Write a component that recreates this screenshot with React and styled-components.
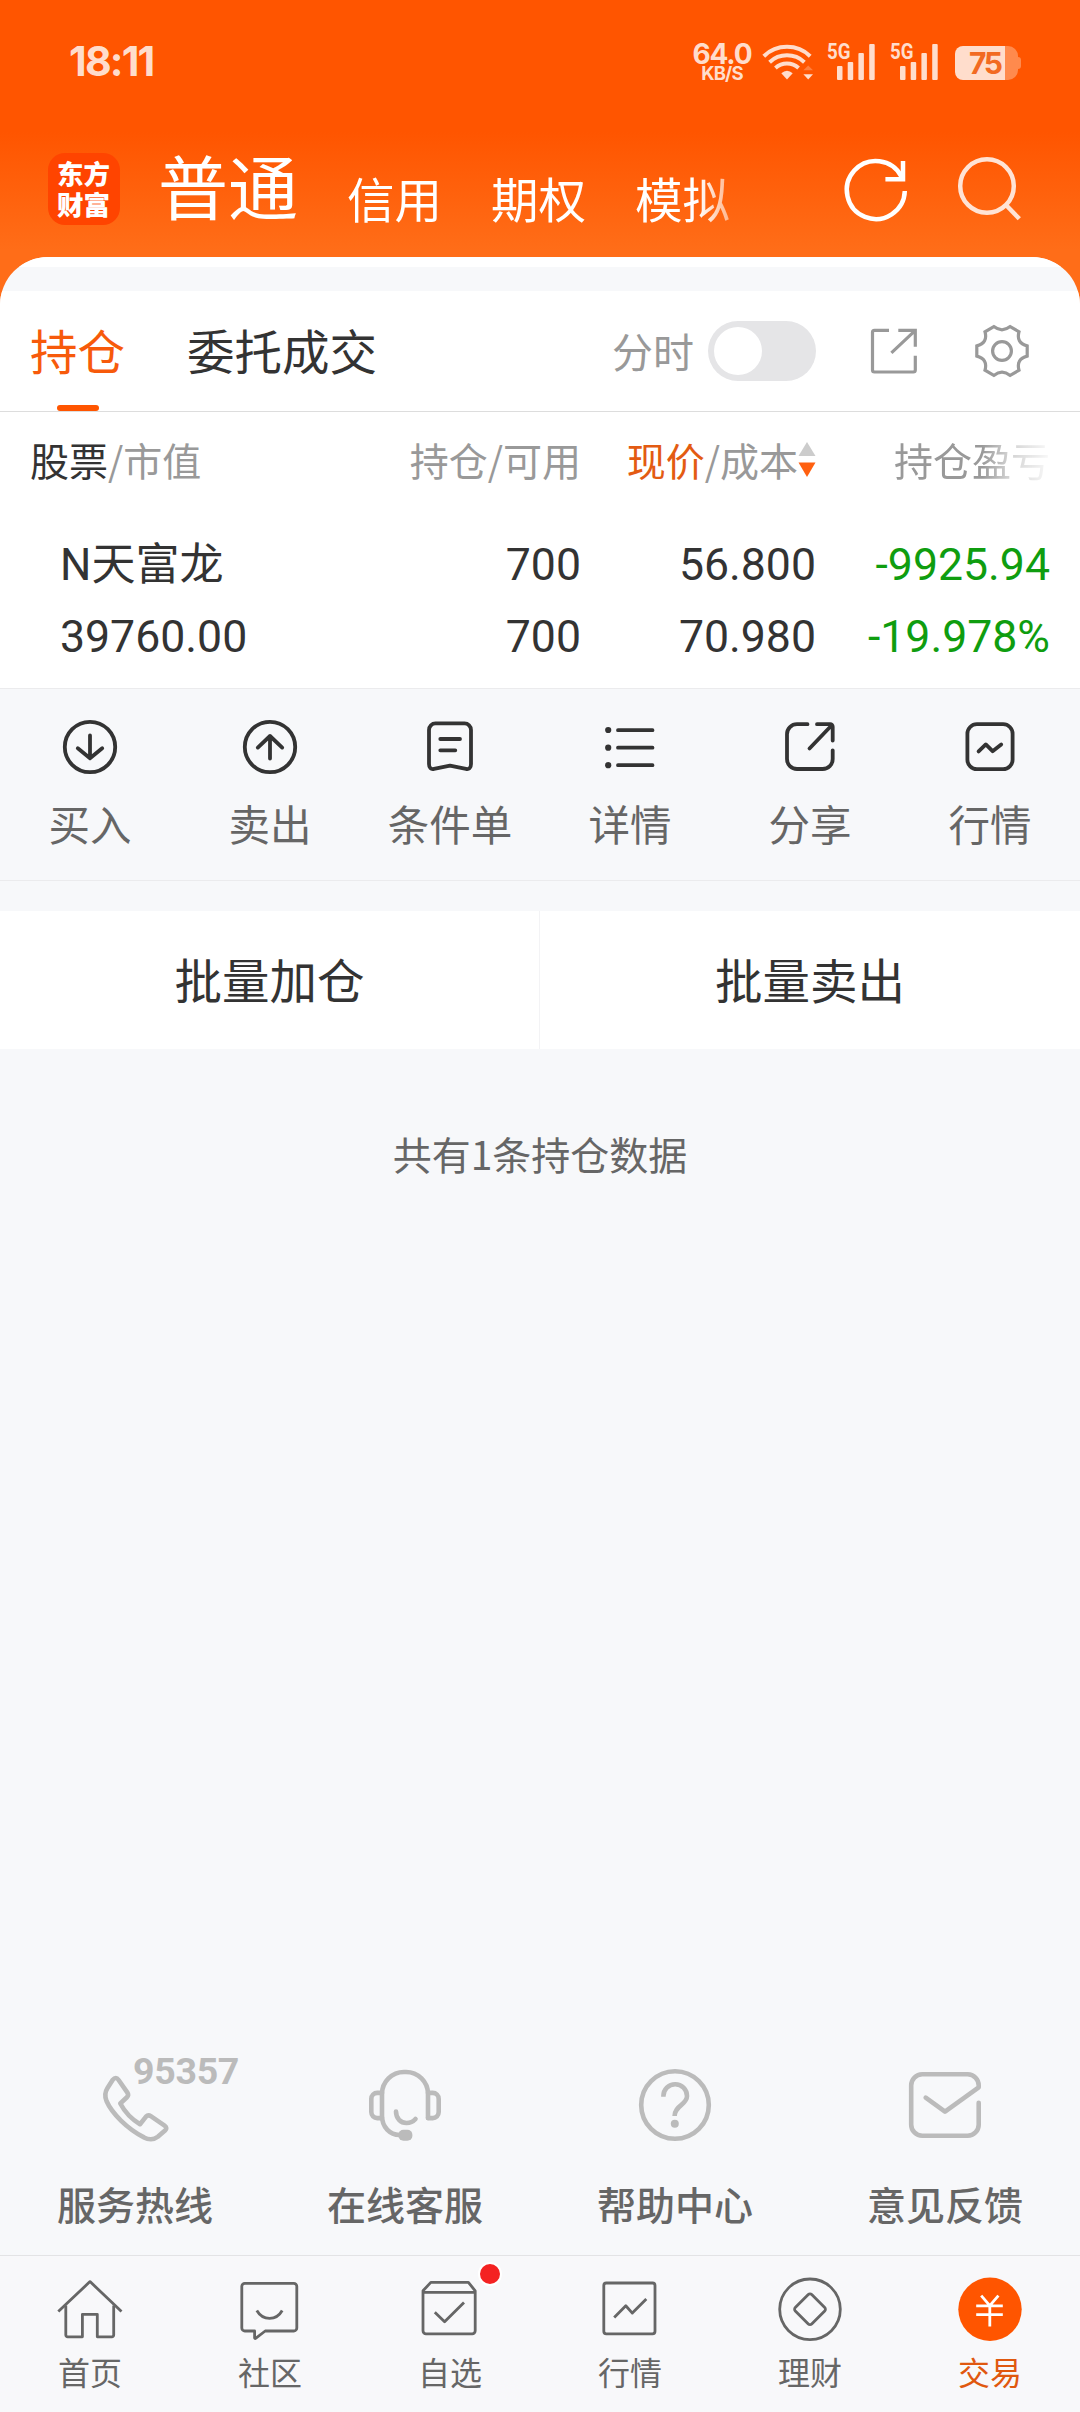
import React from "react";
import styled, { createGlobalStyle, css } from "styled-components";

export default function App() {
  return (
    <Page>
      <GlobalStyle />
      <StatusBar>
        <Clock>18:11</Clock>
        <StatusIcons>
          <NetSpeed>
            <Speed>64.0</Speed>
            <Unit>KB/S</Unit>
          </NetSpeed>
          <WifiIcon />
          <SignalIcon />
          <SignalIcon />
          <Battery>
            <BatteryBody>
              <BatteryText>75</BatteryText>
            </BatteryBody>
            <BatteryNub />
          </Battery>
        </StatusIcons>
      </StatusBar>

      <Header>
        <Logo>东方财富</Logo>
        <AccountTabs>
          <AccountTab $active>普通</AccountTab>
          <AccountTab>信用</AccountTab>
          <AccountTab>期权</AccountTab>
          <AccountTab>模拟</AccountTab>
        </AccountTabs>
        <HeaderButtons>
          <RefreshIcon />
          <SearchIcon />
        </HeaderButtons>
      </Header>

      <Sheet>
        <Strip />
        <TabRow>
          <Tab $active>持仓</Tab>
          <Tab>委托成交</Tab>
          <TabTools>
            <ToolLabel>分时</ToolLabel>
            <Switch>
              <Knob />
            </Switch>
            <ExportIcon />
            <GearIcon />
          </TabTools>
        </TabRow>

        <TableHead>
          <HeadCell $left>
            <Dark>股票</Dark>/市值
          </HeadCell>
          <HeadCell>持仓/可用</HeadCell>
          <HeadCell>
            <Accent>现价</Accent>/成本
            <SortArrows />
          </HeadCell>
          <HeadCell $fade>持仓盈亏</HeadCell>
        </TableHead>

        <TableRow>
          <Cell $left>
            <StockName>N天富龙</StockName>
            <Num>39760.00</Num>
          </Cell>
          <Cell>
            <Num>700</Num>
            <Num>700</Num>
          </Cell>
          <Cell>
            <Num>56.800</Num>
            <Num>70.980</Num>
          </Cell>
          <Cell>
            <Num $down>-9925.94</Num>
            <Num $down>-19.978%</Num>
          </Cell>
        </TableRow>

        <Actions>
          {actions.map((item) => (
            <Action key={item.label}>
              <ActionSvg viewBox="0 0 60 60">{item.icon}</ActionSvg>
              <ActionLabel>{item.label}</ActionLabel>
            </Action>
          ))}
        </Actions>

        <BatchRow>
          <BatchButton>批量加仓</BatchButton>
          <BatchButton>批量卖出</BatchButton>
        </BatchRow>

        <Summary>共有1条持仓数据</Summary>

        <Services>
          {services.map((item) => (
            <Service key={item.label}>
              <ServiceSvg viewBox="0 0 90 90">{item.icon}</ServiceSvg>
              {item.badge && <Hotline>{item.badge}</Hotline>}
              <ServiceLabel>{item.label}</ServiceLabel>
            </Service>
          ))}
        </Services>

        <BottomNav>
          {navs.map((item) => (
            <NavItem key={item.label} $active={item.active}>
              <NavSvg viewBox="0 0 72 72">{item.icon}</NavSvg>
              {item.dot && <Dot />}
              <NavLabel>{item.label}</NavLabel>
            </NavItem>
          ))}
        </BottomNav>
      </Sheet>
    </Page>
  );
}

const actions = [
  {
    label: "买入",
    icon: (
      <>
        <circle cx="30" cy="30" r="25.2" />
        <path d="M30 18.5V41M17.8 31.2 30 41.3l12.2-10.1" />
      </>
    ),
  },
  {
    label: "卖出",
    icon: (
      <>
        <circle cx="30" cy="30" r="25.2" />
        <path d="M30 41.5V19M17.8 30.6 30 19l12.2 11.6" />
      </>
    ),
  },
  {
    label: "条件单",
    icon: (
      <>
        <path d="M15.5 6.4h29a6.500 6.500 0 0 1 6.500 6.500V47c0 4-2 5.600-5 4.900L30 48.600 14 51.900c-3 .7-5-.9-5-4.900V12.900a6.500 6.500 0 0 1 6.500-6.500z" />
        <path d="M20.3 22H40M20.3 33.3h15" />
      </>
    ),
  },
  {
    label: "详情",
    icon: (
      <>
        <path d="M18 13.2h34.5M18 30.7h34.5M18 48.2h34.5" />
        <g fill="currentColor" stroke="none">
          <circle cx="8.2" cy="13" r="3.1" />
          <circle cx="8.2" cy="30.7" r="3.1" />
          <circle cx="8.2" cy="48.2" r="3.1" />
        </g>
      </>
    ),
  },
  {
    label: "分享",
    icon: (
      <>
        <path d="M27.5 7.2H17a10 10 0 0 0-10 10V42a10 10 0 0 0 10 10h25.700a10 10 0 0 0 10-10v-8.700" />
        <path d="M37 7.2h13.200a2.500 2.500 0 0 1 2.500 2.500v13.800M51.500 8.500l-22 23" />
      </>
    ),
  },
  {
    label: "行情",
    icon: (
      <>
        <rect x="7.4" y="7.2" width="45.2" height="45" rx="9.5" />
        <path d="m18.6 34.4 7.2-7 6.8 6.8 8.6-6.8" />
      </>
    ),
  },
];

const services = [
  {
    label: "服务热线",
    badge: "95357",
    icon: (
      <path d="M22.6 20c2.2-2.6 4.2-2.6 6 0l8.8 12.6c1.2 1.8 1 3.2-.5 4.6l-6.6 6.3C34.8 52 41 58.8 50 64.2l6-7.6c1.4-1.5 3-1.7 4.8-.5l13.8 9.5c2.2 1.6 2.2 3.2.4 5l-7.2 6.2c-4 3.2-9.5 3-13.8.6C37 68.5 22 53.5 16.5 41c-1.8-4.5-1.6-9 1-13z" />
    ),
  },
  {
    label: "在线客服",
    icon: (
      <>
        <path d="M39.5 75C30 75 22 67 22 56V34a22 22 0 0 1 22-22h2a22 22 0 0 1 22 22v24" />
        <path d="M68 32.9h4.700a6 6 0 0 1 6 6v13.200a6 6 0 0 1-6 6H68M22 32.900h-4.700a6 6 0 0 0-6 6v13.200a6 6 0 0 0 6 6H22" />
        <path d="M36 51.5c0 7 4.700 11.500 10.500 11.500 3.800 0 6.700-1.400 9-4" />
        <rect x="38.4" y="69.7" width="14" height="11" rx="5" fill="currentColor" stroke="none" />
      </>
    ),
  },
  {
    label: "帮助中心",
    icon: (
      <>
        <circle cx="45" cy="45" r="33.8" />
        <path strokeLinecap="butt" d="M33.4 36.7V36a11.800 11.800 0 0 1 23.600 0c0 9-12.400 9.500-12.400 20" />
        <circle cx="44.8" cy="63.8" r="4" fill="currentColor" stroke="none" />
      </>
    ),
  },
  {
    label: "意见反馈",
    icon: (
      <path d="M78.7 42.8v21.900a11 11 0 0 1-11 11H22.200a11 11 0 0 1-11-11V25.300a11 11 0 0 1 11-11h45.500a11 11 0 0 1 11 11v2L45 51.600 25.700 37.600" />
    ),
  },
];

const navs = [
  {
    label: "首页",
    icon: (
      <>
        <path d="M4.3 38.5 36 8.6l31.5 29.9" />
        <path d="M11.8 32.5v29.500a1.800 1.800 0 0 0 1.800 1.800h14.800V41.300h14.900v22.500h14.600a1.800 1.800 0 0 0 1.800-1.800V32.500" />
      </>
    ),
  },
  {
    label: "社区",
    icon: (
      <>
        <path d="M10.8 10.3h49a3 3 0 0 1 3 3v41.700a3 3 0 0 1-3 3H31.200l-9.600 7.300a.6.6 0 0 1-1-.4V58h-9.800a3 3 0 0 1-3-3V13.300a3 3 0 0 1 3-3z" />
        <path d="M22.8 37.5c6 10.400 19.600 10.400 25.400 0" />
      </>
    ),
  },
  {
    label: "自选",
    dot: true,
    icon: (
      <>
        <path d="M16.8 9.4h37.600l6.800 8.400v40a3 3 0 0 1-3 3H12a3 3 0 0 1-3-3v-40zM9 19.400h52.200" />
        <path d="m20.8 39.3 9.8 9.5 19.4-19.4" />
      </>
    ),
  },
  {
    label: "行情",
    icon: (
      <>
        <rect x="9.8" y="10" width="51.2" height="50.8" rx="2.5" />
        <path d="m20.2 44.5 11.6-11.7 6.5 7.3 14-14.2" />
      </>
    ),
  },
  {
    label: "理财",
    icon: (
      <>
        <circle cx="36" cy="36.3" r="30.3" />
        <path d="M34.3 21.5a2.400 2.400 0 0 1 3.400 0l13 13a2.400 2.400 0 0 1 0 3.400l-13 13a2.400 2.400 0 0 1-3.400 0l-13-13a2.400 2.400 0 0 1 0-3.400z" />
      </>
    ),
  },
  {
    label: "交易",
    active: true,
    icon: (
      <>
        <circle cx="36" cy="36.3" r="31.7" fill="#ff5500" stroke="none" />
        <path
          stroke="#fff"
          strokeLinecap="butt"
          d="m27.2 22.7 8.6 10 8.6-10M35.8 32v21.5M22.2 32.8h26.6M22.2 41.7h26.6"
        />
      </>
    ),
  },
];

function WifiIcon() {
  return (
    <Wifi viewBox="0 0 56 42">
      <g fill="none" stroke="currentColor" strokeWidth="4">
        <path d="M3.8 16.2a33.500 33.500 0 0 1 46.400 0" />
        <path d="M9.6 22.2a25.500 25.500 0 0 1 34.800 0" />
        <path d="M15.4 28a17.500 17.500 0 0 1 23.200 0" />
      </g>
      <path fill="currentColor" d="M21.3 33.2q5.7-5 11.4 0L27 39.5z" />
      <path fill="currentColor" opacity=".3" d="m48.2 25.400 4.800 4.800h-9.600z" />
      <path fill="currentColor" d="m48.2 39.5 4.8-5.2h-9.600z" />
    </Wifi>
  );
}

function SignalIcon() {
  return (
    <Signal viewBox="0 0 50 42">
      <text x="0" y="19" textLength="23.5" lengthAdjust="spacingAndGlyphs">
        5G
      </text>
      <rect x="10" y="26" width="5.5" height="14" rx="1" />
      <rect x="20.7" y="22" width="5.5" height="18" rx="1" />
      <rect x="31.4" y="13" width="5.5" height="27" rx="1" />
      <rect x="42.2" y="4" width="5.5" height="36" rx="1" />
    </Signal>
  );
}

function RefreshIcon() {
  return (
    <HeaderSvg viewBox="0 0 80 80">
      <path d="M68.8 41A29 29 0 1 1 65.500 26.600" />
      <path d="M67 11v18.200H49.400" />
    </HeaderSvg>
  );
}

function SearchIcon() {
  return (
    <HeaderSvg viewBox="0 0 80 80" $soft>
      <circle cx="37" cy="36" r="26.8" />
      <path d="m55.5 54.5 13.8 14.3" />
    </HeaderSvg>
  );
}

function ExportIcon() {
  return (
    <ToolSvg viewBox="0 0 60 60">
      <path d="M25 9.3H10.500a2 2 0 0 0-2 2V49a2 2 0 0 0 2 2h38.800a2 2 0 0 0 2-2V34.700" />
      <path d="M34.3 9.3h17v16.400M50.800 9.800l-23.400 22" />
    </ToolSvg>
  );
}

function GearIcon() {
  return (
    <ToolSvg viewBox="0 0 60 60">
      <path d="M55.2 35.1Q43.9 38 47 49.2l-8.8 5.2Q30 48 21.8 54.4L13 49.2Q16.1 38 4.8 35.1V24.9Q16.1 22 13 10.8l8.8-5.2Q30 12 38.2 5.6l8.8 5.2Q43.9 22 55.2 24.9z" />
      <circle cx="30" cy="30" r="9.4" />
    </ToolSvg>
  );
}

function SortArrows() {
  return (
    <Sort viewBox="0 0 18 36">
      <path fill="#ccc" d="m9 0 8.5 14H.5z" />
      <path fill="#ff6010" d="M9 35 .5 20.500h17z" />
    </Sort>
  );
}

const GlobalStyle = createGlobalStyle`
  * {
    box-sizing: border-box;
  }
  body {
    margin: 0;
    font-family: "Noto Sans CJK SC", sans-serif;
    color: #333;
  }
  svg {
    display: block;
    flex-shrink: 0;
  }
`;

const Page = styled.div`
  width: 1080px;
  height: 2412px;
  display: flex;
  flex-direction: column;
  overflow: hidden;
  background: linear-gradient(#ff5500 0, #ff5500 132px, #ff6d18 250px, #ff6d18 310px, #f7f8fa 310px);
`;

/* status bar */
const StatusBar = styled.div`
  height: 120px;
  padding: 40px 59px 0 69px;
  display: flex;
  justify-content: space-between;
  color: #ffddcc;
`;

const Clock = styled.div`
  font: 700 41px/42px Inter, sans-serif;
  letter-spacing: -1.8px;
`;

const StatusIcons = styled.div`
  display: flex;
  height: 42px;
`;

const NetSpeed = styled.div`
  width: 62px;
  margin-right: 7px;
  padding-top: 1px;
  display: flex;
  flex-direction: column;
  align-items: center;
  font-family: Inter, sans-serif;
`;

const Speed = styled.div`
  font-size: 28px;
  font-weight: 700;
  line-height: 26px;
  letter-spacing: -1.2px;
`;

const Unit = styled.div`
  font-size: 18.5px;
  font-weight: 700;
  line-height: 13px;
  letter-spacing: -0.8px;
`;

const Wifi = styled.svg`
  width: 56px;
  height: 42px;
  margin-right: 11px;
`;

const Signal = styled.svg`
  width: 50px;
  height: 42px;
  margin-right: 13px;
  fill: currentColor;
  font: 700 22px Roboto, sans-serif;
`;

const Battery = styled.div`
  display: flex;
  align-items: center;
  height: 34px;
  margin: 6px 0 0 2px;
`;

const BatteryBody = styled.div`
  width: 63px;
  height: 34px;
  border-radius: 8px 10px 10px 8px;
  background: linear-gradient(90deg, #ffddcc 50px, #ff8a4d 50px);
`;

const BatteryText = styled.div`
  padding-left: 14px;
  font: 700 30px/35px Inter, sans-serif;
  letter-spacing: -2.5px;
  color: #f26a22;
`;

const BatteryNub = styled.div`
  width: 3px;
  height: 12px;
  border-radius: 0 3px 3px 0;
  background: #ff8a4d;
`;

/* header */
const Header = styled.div`
  height: 137px;
  padding: 30px 50px 0 48px;
  display: flex;
`;

const Logo = styled.div`
  width: 72px;
  height: 72px;
  margin-top: 3px;
  padding: 5px 9px 0;
  border-radius: 17px;
  background: #ff4400;
  color: #fff;
  font-size: 26.5px;
  font-weight: 900;
  line-height: 30.5px;
  word-break: break-all;
`;

const AccountTabs = styled.div`
  height: 80px;
  width: 640px;
  margin-left: 38px;
  display: flex;
  align-items: flex-end;
  gap: 49px;
  color: #fff;
  white-space: nowrap;
  mask-image: linear-gradient(90deg, #000 540px, transparent 605px);
`;

const AccountTab = styled.div`
  font-size: ${(p) => (p.$active ? 70 : 47.5)}px;
  line-height: ${(p) => (p.$active ? 90 : 64)}px;
  font-weight: 400;
`;

const HeaderButtons = styled.div`
  margin-left: auto;
  display: flex;
  gap: 34px;
`;

const HeaderSvg = styled.svg`
  width: 80px;
  height: 80px;
  fill: none;
  stroke: ${(p) => (p.$soft ? "#ffe3d5" : "#fff")};
  stroke-width: 4.5;
`;

/* sheet */
const Sheet = styled.div`
  flex: 1;
  display: flex;
  flex-direction: column;
  border-radius: 48px 48px 0 0;
  overflow: hidden;
  background: #f7f8fa;
`;

const Strip = styled.div`
  height: 34px;
  border-top: 10px solid #fff;
`;

const TabRow = styled.div`
  height: 121px;
  padding: 0 48px 0 30px;
  display: flex;
  gap: 62px;
  background: #fff;
  border-bottom: 1px solid #ddd;
`;

const Tab = styled.div`
  height: 120px;
  font-size: 47.5px;
  line-height: 118px;
  color: ${(p) => (p.$active ? "#f75a0b" : "#333")};
  ${(p) =>
    p.$active &&
    css`
      &::after {
        content: "";
        display: block;
        width: 42px;
        height: 6px;
        margin: -4px auto 0;
        border-radius: 3px;
        background: #ff5500;
      }
    `}
`;

const TabTools = styled.div`
  margin-left: auto;
  display: flex;
  align-items: center;
  height: 120px;
`;

const ToolLabel = styled.div`
  margin: -3px 14px 0 0;
  font-size: 41px;
  line-height: 60px;
  color: #999;
`;

const Switch = styled.div`
  width: 108px;
  height: 60px;
  padding: 6px;
  margin-right: 48px;
  border-radius: 30px;
  background: #e5e5e7;
`;

const Knob = styled.div`
  width: 48px;
  height: 48px;
  border-radius: 50%;
  background: #fff;
`;

const ToolSvg = styled.svg`
  width: 60px;
  height: 60px;
  fill: none;
  stroke: #999;
  stroke-width: 3.2;

  & + & {
    margin-left: 48px;
  }
`;

/* table */
const columns = css`
  display: grid;
  grid-template-columns: 341px 210px 235px 234px;
  padding: 0 30px;
  background: #fff;
`;

const TableHead = styled.div`
  ${columns}
  height: 96px;
  padding-bottom: 2px;
`;

const HeadCell = styled.div`
  display: flex;
  align-items: center;
  justify-content: ${(p) => (p.$left ? "flex-start" : "flex-end")};
  font-size: 39px;
  line-height: 58px;
  color: #999;
  white-space: nowrap;
  ${(p) =>
    p.$fade &&
    css`
      mask-image: linear-gradient(90deg, #000 166px, rgba(0, 0, 0, 0.45) 192px, transparent 240px);
    `}
`;

const Dark = styled.span`
  color: #333;
`;

const Accent = styled.span`
  color: #e35b12;
`;

const Sort = styled.svg`
  width: 18px;
  height: 36px;
  margin-top: 1px;
`;

const TableRow = styled.div`
  ${columns}
  height: 181px;
  padding-top: 21px;
  border-bottom: 1px solid #ebebed;
`;

const Cell = styled.div`
  display: flex;
  flex-direction: column;
  align-items: ${(p) => (p.$left ? "flex-start" : "flex-end")};
  padding-left: ${(p) => (p.$left ? 30 : 0)}px;
`;

const Num = styled.div`
  height: 72px;
  font: 400 44.6px/72px Roboto, sans-serif;
  color: ${(p) => (p.$down ? "#0f9d0f" : "#333")};
`;

const StockName = styled(Num)`
  font-family: Roboto, "Noto Sans CJK SC", sans-serif;
  font-size: 44px;
`;

/* position actions */
const Actions = styled.div`
  height: 192px;
  padding-top: 28px;
  display: grid;
  grid-template-columns: repeat(6, 1fr);
  border-bottom: 1px solid #ebebed;
`;

const Action = styled.div`
  display: flex;
  flex-direction: column;
  align-items: center;
`;

const ActionSvg = styled.svg`
  width: 60px;
  height: 60px;
  fill: none;
  stroke: currentColor;
  stroke-width: 3.8;
  stroke-linecap: round;
  stroke-linejoin: round;
`;

const ActionLabel = styled.div`
  margin-top: 16px;
  font-size: 41.5px;
  line-height: 60px;
  color: #666;
`;

const BatchRow = styled.div`
  display: grid;
  grid-template-columns: 539px 541px;
  margin-top: 30px;
  height: 138px;
  background: #fff;
`;

const BatchButton = styled.div`
  text-align: center;
  font-size: 47.5px;
  line-height: 136px;

  & + & {
    border-left: 1px solid #f3f3f5;
  }
`;

const Summary = styled.div`
  margin-top: 75px;
  text-align: center;
  font-size: 39px;
  line-height: 58px;
  color: #666;
`;

/* service links */
const Services = styled.div`
  margin-top: auto;
  height: 195px;
  display: grid;
  grid-template-columns: repeat(4, 1fr);
`;

const Service = styled.div`
  position: relative;
  display: flex;
  flex-direction: column;
  align-items: center;
`;

const ServiceSvg = styled.svg`
  width: 90px;
  height: 90px;
  color: #bbb;
  fill: none;
  stroke: currentColor;
  stroke-width: 4.6;
  stroke-linecap: round;
  stroke-linejoin: round;
`;

const Hotline = styled.div`
  position: absolute;
  left: 133px;
  top: -11px;
  font: 700 37.5px/44px Roboto, sans-serif;
  letter-spacing: -0.3px;
  color: #bbb;
`;

const ServiceLabel = styled.div`
  margin-top: 24px;
  font-size: 39px;
  font-weight: 500;
  line-height: 58px;
  color: #666;
`;

/* bottom navigation */
const BottomNav = styled.div`
  height: 157px;
  padding-top: 17px;
  display: grid;
  grid-template-columns: repeat(6, 1fr);
  border-top: 1px solid #e3e3e5;
  background: #f8f8fa;
`;

const NavItem = styled.div`
  position: relative;
  display: flex;
  flex-direction: column;
  align-items: center;
  color: ${(p) => (p.$active ? "#e0580f" : "#666")};
`;

const NavSvg = styled.svg`
  width: 72px;
  height: 72px;
  fill: none;
  stroke: currentColor;
  stroke-width: 2.8;
  stroke-linejoin: round;
`;

const NavLabel = styled.div`
  margin-top: 3px;
  font-size: 32px;
  line-height: 46px;
`;

const Dot = styled.div`
  position: absolute;
  left: 118px;
  top: -11px;
  width: 24px;
  height: 24px;
  border: 2px solid #fff;
  border-radius: 50%;
  background: #f42222;
`;
